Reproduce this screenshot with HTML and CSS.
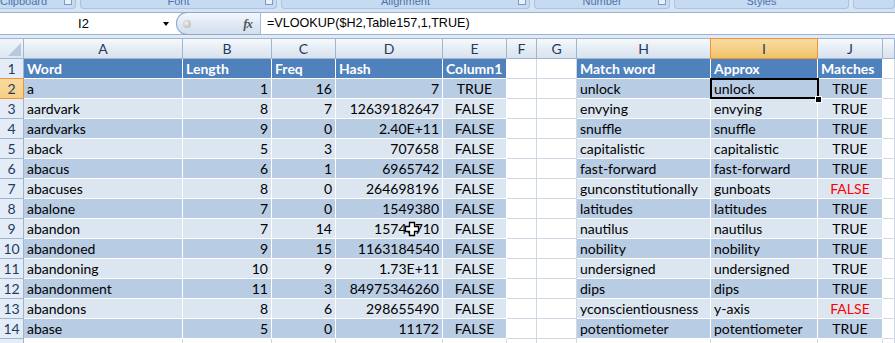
FILE: index.html
```html
<!DOCTYPE html>
<html>
<head>
<meta charset="utf-8">
<link rel="stylesheet" href="styles.css">
</head>
<body>
<div class="app">
  <div class="ribbon">
    <div class="grp g1"><span>Clipboard</span><i class="launch"></i></div>
    <div class="grp g2"><span>Font</span><i class="launch"></i></div>
    <div class="grp g3"><span>Alignment</span><i class="launch"></i></div>
    <div class="grp g4"><span>Number</span><i class="launch"></i></div>
    <div class="grp g5"><span>Styles</span></div>
    <div class="grp g6"></div>
  </div>
  <div class="fbar">
    <div class="namebox"><span class="nbtext">I2</span><span class="nbarrow"></span></div>
    <div class="fxbtn"><span class="dot"></span><span class="fx">fx</span></div>
    <div class="formula">=VLOOKUP($H2,Table157,1,TRUE)</div>
  </div>
  <div class="gapline"></div>
  <div class="sheet">
    <div class="row">
      <div class="corner"></div>
      <div class="ch">A</div><div class="ch">B</div><div class="ch">C</div><div class="ch">D</div><div class="ch">E</div><div class="ch">F</div><div class="ch">G</div><div class="ch">H</div><div class="ch act">I</div><div class="ch">J</div><div class="ch"></div>
    </div>
    <div class="row hd">
      <div class="rh">1</div>
      <div class="c tb">Word</div><div class="c tb">Length</div><div class="c tb">Freq</div><div class="c tb">Hash</div><div class="c tb">Column1</div><div class="c g"></div><div class="c g"></div><div class="c tb">Match word</div><div class="c tb">Approx</div><div class="c tb">Matches</div><div class="c g"></div>
    </div>
    <div class="row dk">
      <div class="rh act">2</div>
      <div class="c tb">a</div><div class="c tb num">1</div><div class="c tb num">16</div><div class="c tb num">7</div><div class="c tb ctr">TRUE</div><div class="c g"></div><div class="c g"></div><div class="c tb">unlock</div><div class="c tb sel">unlock<span class="selbox"></span><span class="handle"></span></div><div class="c tb ctr">TRUE</div><div class="c g"></div>
    </div>
    <div class="row lt">
      <div class="rh">3</div>
      <div class="c tb">aardvark</div><div class="c tb num">8</div><div class="c tb num">7</div><div class="c tb num">12639182647</div><div class="c tb ctr">FALSE</div><div class="c g"></div><div class="c g"></div><div class="c tb">envying</div><div class="c tb">envying</div><div class="c tb ctr">TRUE</div><div class="c g"></div>
    </div>
    <div class="row dk">
      <div class="rh">4</div>
      <div class="c tb">aardvarks</div><div class="c tb num">9</div><div class="c tb num">0</div><div class="c tb num">2.40E+11</div><div class="c tb ctr">FALSE</div><div class="c g"></div><div class="c g"></div><div class="c tb">snuffle</div><div class="c tb">snuffle</div><div class="c tb ctr">TRUE</div><div class="c g"></div>
    </div>
    <div class="row lt">
      <div class="rh">5</div>
      <div class="c tb">aback</div><div class="c tb num">5</div><div class="c tb num">3</div><div class="c tb num">707658</div><div class="c tb ctr">FALSE</div><div class="c g"></div><div class="c g"></div><div class="c tb">capitalistic</div><div class="c tb">capitalistic</div><div class="c tb ctr">TRUE</div><div class="c g"></div>
    </div>
    <div class="row dk">
      <div class="rh">6</div>
      <div class="c tb">abacus</div><div class="c tb num">6</div><div class="c tb num">1</div><div class="c tb num">6965742</div><div class="c tb ctr">FALSE</div><div class="c g"></div><div class="c g"></div><div class="c tb">fast-forward</div><div class="c tb">fast-forward</div><div class="c tb ctr">TRUE</div><div class="c g"></div>
    </div>
    <div class="row lt">
      <div class="rh">7</div>
      <div class="c tb">abacuses</div><div class="c tb num">8</div><div class="c tb num">0</div><div class="c tb num">264698196</div><div class="c tb ctr">FALSE</div><div class="c g"></div><div class="c g"></div><div class="c tb">gunconstitutionally</div><div class="c tb">gunboats</div><div class="c tb ctr red">FALSE</div><div class="c g"></div>
    </div>
    <div class="row dk">
      <div class="rh">8</div>
      <div class="c tb">abalone</div><div class="c tb num">7</div><div class="c tb num">0</div><div class="c tb num">1549380</div><div class="c tb ctr">FALSE</div><div class="c g"></div><div class="c g"></div><div class="c tb">latitudes</div><div class="c tb">latitudes</div><div class="c tb ctr">TRUE</div><div class="c g"></div>
    </div>
    <div class="row lt">
      <div class="rh">9</div>
      <div class="c tb">abandon</div><div class="c tb num">7</div><div class="c tb num">14</div><div class="c tb num">15746710</div><div class="c tb ctr">FALSE</div><div class="c g"></div><div class="c g"></div><div class="c tb">nautilus</div><div class="c tb">nautilus</div><div class="c tb ctr">TRUE</div><div class="c g"></div>
    </div>
    <div class="row dk">
      <div class="rh">10</div>
      <div class="c tb">abandoned</div><div class="c tb num">9</div><div class="c tb num">15</div><div class="c tb num">1163184540</div><div class="c tb ctr">FALSE</div><div class="c g"></div><div class="c g"></div><div class="c tb">nobility</div><div class="c tb">nobility</div><div class="c tb ctr">TRUE</div><div class="c g"></div>
    </div>
    <div class="row lt">
      <div class="rh">11</div>
      <div class="c tb">abandoning</div><div class="c tb num">10</div><div class="c tb num">9</div><div class="c tb num">1.73E+11</div><div class="c tb ctr">FALSE</div><div class="c g"></div><div class="c g"></div><div class="c tb">undersigned</div><div class="c tb">undersigned</div><div class="c tb ctr">TRUE</div><div class="c g"></div>
    </div>
    <div class="row dk">
      <div class="rh">12</div>
      <div class="c tb">abandonment</div><div class="c tb num">11</div><div class="c tb num">3</div><div class="c tb num">84975346260</div><div class="c tb ctr">FALSE</div><div class="c g"></div><div class="c g"></div><div class="c tb">dips</div><div class="c tb">dips</div><div class="c tb ctr">TRUE</div><div class="c g"></div>
    </div>
    <div class="row lt">
      <div class="rh">13</div>
      <div class="c tb">abandons</div><div class="c tb num">8</div><div class="c tb num">6</div><div class="c tb num">298655490</div><div class="c tb ctr">FALSE</div><div class="c g"></div><div class="c g"></div><div class="c tb">yconscientiousness</div><div class="c tb">y-axis</div><div class="c tb ctr red">FALSE</div><div class="c g"></div>
    </div>
    <div class="row dk">
      <div class="rh">14</div>
      <div class="c tb">abase</div><div class="c tb num">5</div><div class="c tb num">0</div><div class="c tb num">11172</div><div class="c tb ctr">FALSE</div><div class="c g"></div><div class="c g"></div><div class="c tb">potentiometer</div><div class="c tb">potentiometer</div><div class="c tb ctr">TRUE</div><div class="c g"></div>
    </div>
    <div class="row">
      <div class="rh">15</div>
      <div class="c g"></div><div class="c g"></div><div class="c g"></div><div class="c g"></div><div class="c g"></div><div class="c g"></div><div class="c g"></div><div class="c g"></div><div class="c g"></div><div class="c g"></div><div class="c g"></div>
    </div>
    <svg class="cursor" width="16" height="16" viewBox="0 0 16 16"><path d="M5.5 1.5h5v4h4v5h-4v4h-5v-4h-4v-5h4z" fill="#fff" stroke="#000" stroke-width="1.3" stroke-linejoin="miter"/></svg>
  </div>
</div>
</body>
</html>
```
FILE: styles.css
```css
html, body {
  margin: 0;
  padding: 0;
  background: #fff;
  overflow: hidden;
}
.app {
  width: 895px;
  height: 343px;
  overflow: hidden;
  font-family: Lato, "Noto Sans", sans-serif;
  background: #dde7f4;
}
.ribbon {
  height: 12px;
  display: flex;
  gap: 4px;
  background: #d6e3f2;
  overflow: hidden;
}
.grp {
  position: relative;
  height: 8px;
  background: #c6daf1;
  border: 1px solid #a9c3e2;
  border-top: none;
  border-radius: 0 0 4px 4px;
  overflow: hidden;
  text-align: center;
  font: 11px "Liberation Sans", Arial, sans-serif;
  color: #4a73ad;
  flex: none;
}
.grp span {
  display: block;
  line-height: 12px;
  margin-top: -5px;
}
.g1 { width: 84px; margin-left: -10px; }
.g1 span { text-align: left; padding-left: 9px; }
.g2 { width: 195px; }
.g3 { width: 247px; }
.g4 { width: 134px; }
.g5 { width: 173px; }
.g6 { flex: 1; }
.launch {
  position: absolute;
  right: 3px;
  top: 0;
  width: 6px;
  height: 4px;
  border: 1px solid #7d9ac2;
  border-top: none;
  background: #e8f0fa;
}
.fbar {
  height: 21px;
  border-top: 1px solid #9ab3d3;
  border-bottom: 1px solid #9ab3d3;
  background: #fff;
  display: flex;
}
.namebox {
  width: 176px;
  display: flex;
  align-items: center;
  flex: none;
}
.nbtext {
  flex: 1;
  text-align: center;
  font: 13px "Liberation Sans", Arial, sans-serif;
  color: #000;
  padding-left: 4px;
}
.nbarrow {
  width: 0;
  height: 0;
  border-left: 3.5px solid transparent;
  border-right: 3.5px solid transparent;
  border-top: 4px solid #000;
  margin-right: 7px;
  margin-top: 1px;
}
.fxbtn {
  width: 85px;
  flex: none;
  box-sizing: border-box;
  border: 1px solid #8ea9cb;
  border-right-color: #a7bcd8;
  border-radius: 11px 0 0 11px;
  background: linear-gradient(#f4f8fd, #dde7f3 60%, #d3dfee);
  display: flex;
  align-items: center;
  margin-top: -1px;
  height: 23px;
}
.dot {
  width: 8px;
  height: 8px;
  border-radius: 50%;
  background: radial-gradient(circle at 40% 40%, #f2f2f2, #a9a9a9);
  margin-left: 6px;
}
.fx {
  margin-left: auto;
  margin-right: 8px;
  font: italic bold 13px "Liberation Serif", "DejaVu Serif", serif;
  color: #555;
  letter-spacing: -1px;
}
.formula {
  flex: 1;
  padding-left: 6px;
  font: 12.6px "Liberation Sans", Arial, sans-serif;
  line-height: 21px;
  color: #000;
}
.gapline {
  height: 3px;
  background: #e2eaf5;
}
.sheet {
  position: relative;
  display: grid;
  grid-template-columns: 24px 159px 89px 64px 107px 64px 30px 40px 134px 107px 65px 1fr;
  grid-template-rows: 21px;
  grid-auto-rows: 20px;
  background: #fff;
  font-size: 14px;
}
.row { display: contents; }
.corner, .ch {
  box-sizing: border-box;
  border-top: 1px solid #9eb6ce;
  border-bottom: 1px solid #9eb6ce;
  border-right: 1px solid #9eb6ce;
  background: linear-gradient(#f6f9fc, #e4ebf4 55%, #d9e2ee);
  text-align: center;
  line-height: 19px;
  color: #1f3b5e;
}
.corner {
  position: relative;
  background: linear-gradient(#f2f6fb, #dde6f1);
}
.corner::after {
  content: "";
  position: absolute;
  right: 2px;
  bottom: 2px;
  width: 0;
  height: 0;
  border-left: 13px solid transparent;
  border-bottom: 13px solid #b8c9dd;
}
.ch.act {
  background: linear-gradient(#f9dca3, #f5cf85 55%, #f1c15f);
  border-color: #f29436;
  border-left: 1px solid #f29436;
  margin-left: -1px;
}
.rh {
  box-sizing: border-box;
  border-right: 1px solid #9eb6ce;
  border-bottom: 1px solid #9eb6ce;
  background: #e4ecf7;
  text-align: center;
  line-height: 19px;
  color: #1f3b5e;
}
.rh.act {
  background: linear-gradient(#f9dba0, #f6cf87);
  border-right-color: #f29436;
  border-bottom-color: #f29436;
  border-top: 1px solid #f29436;
  margin-top: -1px;
}
.c {
  box-sizing: border-box;
  border-right: 1px solid #fff;
  border-bottom: 1px solid #fff;
  padding: 0 3px;
  white-space: nowrap;
  overflow: hidden;
  line-height: 19px;
  color: #000;
}
.c.g {
  border-right-color: #d0d7e5;
  border-bottom-color: #d0d7e5;
}
.hd .tb {
  background: #4f81bd;
  color: #fff;
  font-weight: bold;
}
.dk .tb { background: #b8cce4; }
.lt .tb { background: #dce6f1; }
.num { text-align: right; }
.ctr { text-align: center; }
.red { color: #f00; }
.sel {
  position: relative;
  overflow: visible;
}
.selbox {
  position: absolute;
  left: -1px;
  top: -1px;
  width: 109px;
  height: 21px;
  box-sizing: border-box;
  border: 2px solid #000;
}
.handle {
  position: absolute;
  left: 104px;
  top: 17px;
  width: 5px;
  height: 5px;
  background: #000;
  border: 1px solid #fff;
  z-index: 2;
}
.cursor {
  position: absolute;
  left: 404px;
  top: 183px;
}
```
